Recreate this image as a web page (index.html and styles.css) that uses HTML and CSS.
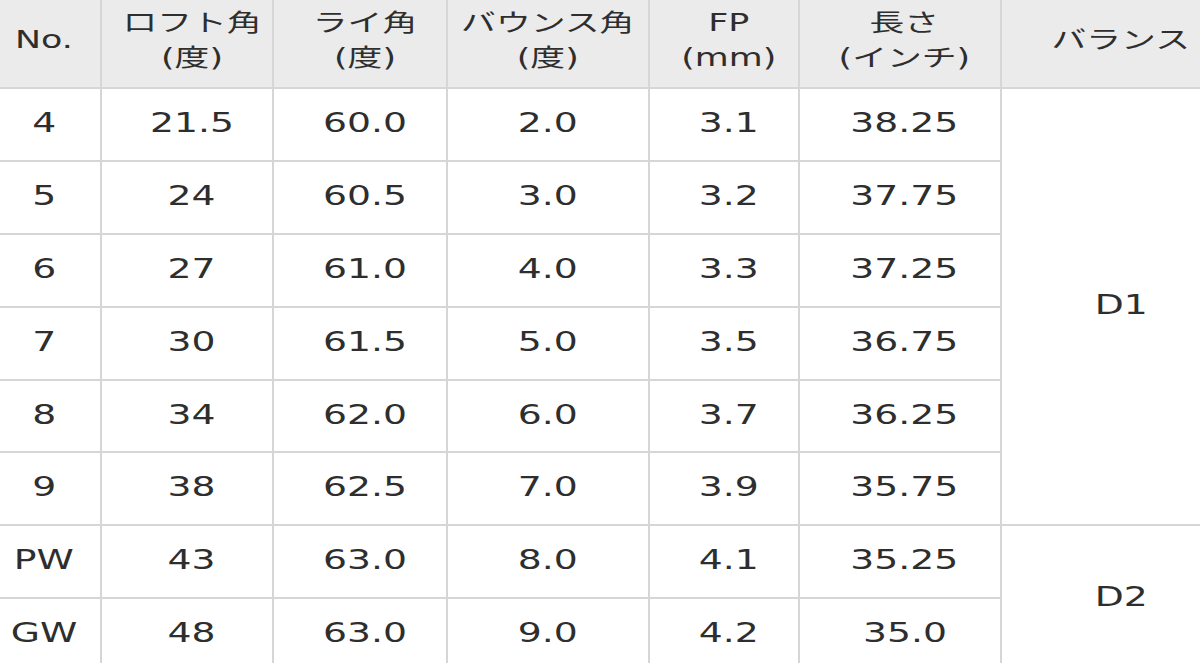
FILE: index.html
```html
<!DOCTYPE html>
<html lang="ja">
<head>
<meta charset="utf-8">
<title>スペック表</title>
<link rel="stylesheet" href="styles.css">
</head>
<body>
<div class="wrap">
<table class="spec">
  <colgroup>
    <col class="c-no"><col class="c-loft"><col class="c-lie"><col class="c-bounce"><col class="c-fp"><col class="c-len"><col class="c-bal">
  </colgroup>
  <thead>
    <tr class="head">
      <th><span class="t">No.</span></th>
      <th class="sh"><span class="t">ロフト角<br>(度)</span></th>
      <th class="sh"><span class="t">ライ角<br>(度)</span></th>
      <th><span class="t">バウンス角<br>(度)</span></th>
      <th class="sh"><span class="t">FP<br>(mm)</span></th>
      <th class="sh"><span class="t">長さ<br>(インチ)</span></th>
      <th><span class="t">バランス</span></th>
    </tr>
  </thead>
  <tbody>
    <tr><td><span class="t">4</span></td><td class="sh"><span class="t">21.5</span></td><td class="sh"><span class="t">60.0</span></td><td><span class="t">2.0</span></td><td class="sh"><span class="t">3.1</span></td><td class="sh"><span class="t">38.25</span></td><td class="bal" rowspan="6"><span class="t">D1</span></td></tr>
    <tr><td><span class="t">5</span></td><td class="sh"><span class="t">24</span></td><td class="sh"><span class="t">60.5</span></td><td><span class="t">3.0</span></td><td class="sh"><span class="t">3.2</span></td><td class="sh"><span class="t">37.75</span></td></tr>
    <tr><td><span class="t">6</span></td><td class="sh"><span class="t">27</span></td><td class="sh"><span class="t">61.0</span></td><td><span class="t">4.0</span></td><td class="sh"><span class="t">3.3</span></td><td class="sh"><span class="t">37.25</span></td></tr>
    <tr><td><span class="t">7</span></td><td class="sh"><span class="t">30</span></td><td class="sh"><span class="t">61.5</span></td><td><span class="t">5.0</span></td><td class="sh"><span class="t">3.5</span></td><td class="sh"><span class="t">36.75</span></td></tr>
    <tr><td><span class="t">8</span></td><td class="sh"><span class="t">34</span></td><td class="sh"><span class="t">62.0</span></td><td><span class="t">6.0</span></td><td class="sh"><span class="t">3.7</span></td><td class="sh"><span class="t">36.25</span></td></tr>
    <tr><td><span class="t">9</span></td><td class="sh"><span class="t">38</span></td><td class="sh"><span class="t">62.5</span></td><td><span class="t">7.0</span></td><td class="sh"><span class="t">3.9</span></td><td class="sh"><span class="t">35.75</span></td></tr>
    <tr><td><span class="t">PW</span></td><td class="sh"><span class="t">43</span></td><td class="sh"><span class="t">63.0</span></td><td><span class="t">8.0</span></td><td class="sh"><span class="t">4.1</span></td><td class="sh"><span class="t">35.25</span></td><td class="bal" rowspan="2"><span class="t">D2</span></td></tr>
    <tr><td><span class="t">GW</span></td><td class="sh"><span class="t">48</span></td><td class="sh"><span class="t">63.0</span></td><td><span class="t">9.0</span></td><td class="sh"><span class="t">4.2</span></td><td class="sh"><span class="t">35.0</span></td></tr>
  </tbody>
</table>
</div>
</body>
</html>
```
FILE: styles.css
```css
html, body {
  margin: 0;
  padding: 0;
  background: #ffffff;
}
body {
  width: 1200px;
  height: 663px;
  overflow: hidden;
  font-family: "DejaVu Sans", "Noto Sans CJK JP", sans-serif;
  color: #2e2e2e;
}
.wrap {
  margin-left: -14px;
  width: 1254px;
}
.spec {
  width: 1254px;
  border-collapse: collapse;
  table-layout: fixed;
}
.c-no { width: 114px; }
.c-loft { width: 172px; }
.c-lie { width: 174px; }
.c-bounce { width: 202px; }
.c-fp { width: 150px; }
.c-len { width: 202px; }
.c-bal { width: 240px; }

.spec th,
.spec td {
  border: 2px solid #d6d6d6;
  text-align: center;
  vertical-align: middle;
  padding: 0;
}
.spec tr:first-child th { border-top: none; }
.spec th {
  background: #ebebeb;
  font-weight: normal;
  font-size: 24px;
  line-height: 35px;
  height: 88px;
  padding-bottom: 6px;
  box-sizing: border-box;
}
.spec td {
  font-size: 26px;
  line-height: 30px;
  height: 72.9px;
  box-sizing: border-box;
  padding-bottom: 3px;
}
.spec .sh {
  padding-left: 9px;
}
.t {
  display: inline-block;
  transform: scaleX(1.45);
  white-space: nowrap;
}
```
